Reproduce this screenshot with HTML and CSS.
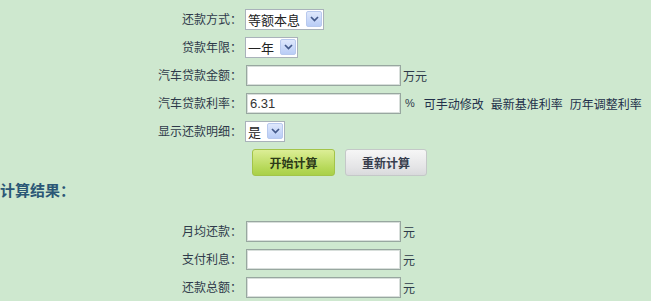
FILE: index.html
```html
<!DOCTYPE html>
<html lang="zh-CN">
<head>
<meta charset="utf-8">
<title>汽车贷款计算器</title>
<link rel="stylesheet" href="styles.css">
</head>
<body>
<div class="page">
  <div class="form">
    <label class="lbl">还款方式：</label>
    <div class="field">
      <span class="sel"><select><option>等额本息</option></select><span class="arrow"><svg width="9" height="6" viewBox="0 0 9 6"><path d="M1 1 L4.5 4.5 L8 1" fill="none" stroke="#43598a" stroke-width="1.7"/></svg></span></span>
    </div>

    <label class="lbl">贷款年限：</label>
    <div class="field">
      <span class="sel"><select><option>一年</option></select><span class="arrow"><svg width="9" height="6" viewBox="0 0 9 6"><path d="M1 1 L4.5 4.5 L8 1" fill="none" stroke="#43598a" stroke-width="1.7"/></svg></span></span>
    </div>

    <label class="lbl">汽车贷款金额：</label>
    <div class="field"><input class="txt" type="text" value=""><span class="unit">万元</span></div>

    <label class="lbl">汽车贷款利率：</label>
    <div class="field"><input class="txt" type="text" value="6.31"><span class="unit pct">%</span><a class="lnk">可手动修改</a><a class="lnk">最新基准利率</a><a class="lnk">历年调整利率</a></div>

    <label class="lbl">显示还款明细：</label>
    <div class="field">
      <span class="sel"><select><option>是</option></select><span class="arrow"><svg width="9" height="6" viewBox="0 0 9 6"><path d="M1 1 L4.5 4.5 L8 1" fill="none" stroke="#43598a" stroke-width="1.7"/></svg></span></span>
    </div>
  </div>

  <div class="actions">
    <button class="btn btn-go" type="button">开始计算</button>
    <button class="btn btn-reset" type="button">重新计算</button>
  </div>

  <h3 class="result-title">计算结果：</h3>

  <div class="form result">
    <label class="lbl">月均还款：</label>
    <div class="field"><input class="txt" type="text"><span class="unit">元</span></div>
    <label class="lbl">支付利息：</label>
    <div class="field"><input class="txt" type="text"><span class="unit">元</span></div>
    <label class="lbl">还款总额：</label>
    <div class="field"><input class="txt" type="text"><span class="unit">元</span></div>
  </div>
</div>
</body>
</html>
```

FILE: styles.css
```css
html, body {
  margin: 0;
  padding: 0;
  background: #cee8cf;
}
body {
  font-family: "Noto Sans CJK SC", "Liberation Sans", sans-serif;
  font-size: 12px;
  color: #2e3a4a;
  overflow: hidden;
}
.page {
  padding-top: 5px;
}
.form {
  display: grid;
  grid-template-columns: 240px auto;
  grid-auto-rows: 28px;
  column-gap: 6px;
  align-items: center;
}
.lbl {
  justify-self: end;
  font-size: 12px;
  line-height: 16px;
  color: #2e3a4a;
  white-space: nowrap;
  margin-right: -2px;
}
.field {
  display: flex;
  align-items: center;
  white-space: nowrap;
}
.sel {
  display: inline-flex;
  align-items: center;
  height: 21px;
  box-sizing: border-box;
  border: 1px solid #a9b2ba;
  background: #fff;
  padding: 0 1px 0 2px;
  margin-left: -1px;
}
.sel select {
  appearance: none;
  -webkit-appearance: none;
  border: 0;
  background: transparent;
  font-family: "Noto Sans CJK SC", sans-serif;
  font-size: 13px;
  line-height: 17px;
  color: #222;
  padding: 0 5px 0 0;
  margin: 0;
  outline: none;
}
.arrow {
  display: inline-flex;
  align-items: center;
  justify-content: center;
  width: 16px;
  height: 16px;
  box-sizing: border-box;
  border: 1px solid #b8c9ee;
  border-radius: 2px;
  background: linear-gradient(#dfe8fc, #b9cdf6);
}
.txt {
  width: 155px;
  height: 21px;
  box-sizing: border-box;
  border: 1px solid #98a7a0;
  box-shadow: inset 0 0 0 1px #d8dfdb;
  background: #fff;
  font-family: "Liberation Sans", sans-serif;
  font-size: 13px;
  color: #333;
  padding: 0 3px;
  margin: 0;
  outline: none;
}
.unit {
  margin-left: 2px;
  font-size: 12px;
  color: #2e3a4a;
}
.pct {
  margin-left: 4px;
  margin-right: 9px;
  font-family: "Liberation Sans", sans-serif;
  font-size: 11px;
}
.lnk {
  color: #22304a;
  margin-right: 7px;
  font-size: 12px;
}
.actions {
  display: flex;
  gap: 10px;
  margin: 4px 0 0 252px;
}
.btn {
  width: 83px;
  height: 27px;
  box-sizing: border-box;
  border-radius: 3px;
  font-family: "Noto Sans CJK SC", sans-serif;
  font-size: 12px;
  font-weight: bold;
  padding: 0;
  cursor: pointer;
}
.btn-go {
  border: 1px solid #a3c449;
  background: linear-gradient(#dcee96, #b7d95a 70%, #a9d048);
  color: #2c3a18;
}
.btn-reset {
  width: 82px;
  border: 1px solid #c4c8c8;
  background: linear-gradient(#f6f6f6, #e4e4e6 70%, #d9dadc);
  color: #363c4c;
}
.result-title {
  margin: 4px 0 0 0;
  font-size: 15px;
  line-height: 20px;
  font-weight: bold;
  color: #2b5776;
}
.result {
  margin-top: 17px;
}
```
